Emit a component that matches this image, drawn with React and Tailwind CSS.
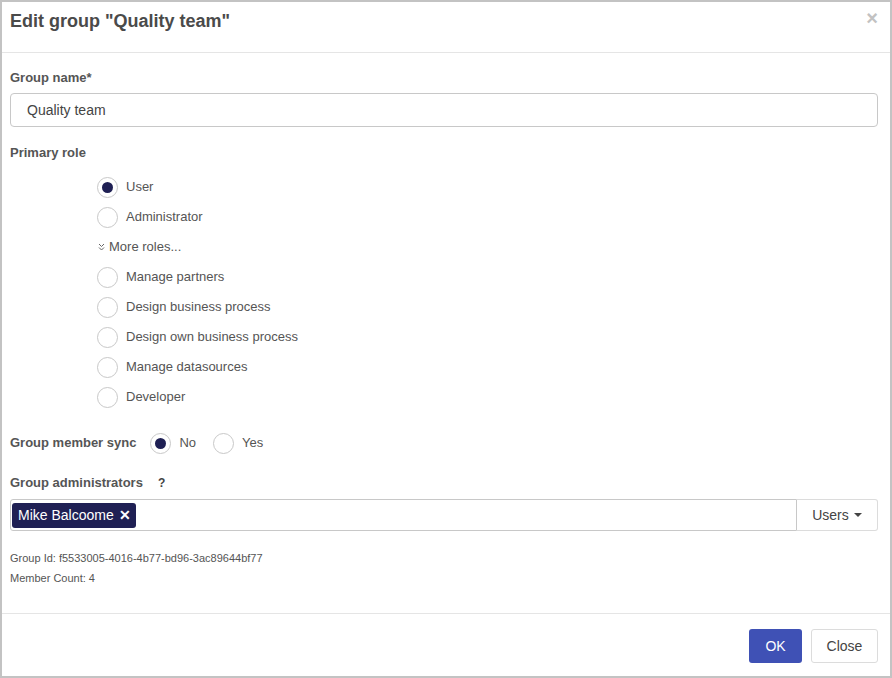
import React, { useState } from 'react';

const font = { fontFamily: '"Liberation Sans", Arial, sans-serif' };

const Radio = ({ checked, label, onClick }) => (
  <label className="flex items-center h-[30px] cursor-pointer" onClick={onClick}>
    <span className="w-[21px] h-[21px] rounded-full border border-[#c8c8c8] bg-white flex items-center justify-center shrink-0">
      {checked && <span className="w-[11px] h-[11px] rounded-full bg-[#1f2054]" />}
    </span>
    {label && <span className="ml-[8px] text-[13px] text-[#555]">{label}</span>}
  </label>
);

const roles = [
  'Manage partners',
  'Design business process',
  'Design own business process',
  'Manage datasources',
  'Developer',
];

export default function App() {
  const [role, setRole] = useState('User');
  const [sync, setSync] = useState('No');

  return (
    <div style={font} className="w-[892px] h-[678px] border-2 border-[#c3c3c3] bg-white flex flex-col">
      {/* Header */}
      <div className="h-[51px] border-b border-[#e5e5e5] flex items-start justify-between pl-[8px] pr-[12px] shrink-0">
        <h1 className="mt-[6px] text-[18px] font-bold text-[#4a4a4a]">Edit group "Quality team"</h1>
        <span className="mt-[6px] text-[#c2c2c2] text-[20px] font-bold leading-none">×</span>
      </div>

      {/* Body */}
      <div className="flex-1 pl-[8px] pr-[12px] pt-[16px]">
        <div className="text-[13px] font-bold text-[#555] leading-[18px]">Group name*</div>
        <div className="mt-[6px] h-[34px] border border-[#c8c8c8] rounded-[4px] flex items-center px-[16px] text-[14px] text-[#444]">
          Quality team
        </div>

        <div className="mt-[17px] text-[13px] font-bold text-[#555] leading-[18px]">Primary role</div>
        <div className="mt-[10px] pl-[87px] flex flex-col">
          <Radio label="User" checked={role === 'User'} onClick={() => setRole('User')} />
          <Radio label="Administrator" checked={role === 'Administrator'} onClick={() => setRole('Administrator')} />
          <div className="h-[30px] flex items-center text-[13px] text-[#555]">
            <svg width="7" height="8" viewBox="0 0 7 8" className="ml-[1px] mr-[4px]">
              <path d="M1 1 L3.5 3.5 L6 1 M1 4.5 L3.5 7 L6 4.5" fill="none" stroke="#666" strokeWidth="1" />
            </svg>
            More roles...
          </div>
          {roles.map(r => (
            <Radio key={r} label={r} checked={role === r} onClick={() => setRole(r)} />
          ))}
        </div>

        <div className="mt-[16px] flex items-center h-[30px]">
          <span className="text-[13px] font-bold text-[#555] mr-[14px]">Group member sync</span>
          <Radio label="No" checked={sync === 'No'} onClick={() => setSync('No')} />
          <span className="w-[17px]" />
          <Radio label="Yes" checked={sync === 'Yes'} onClick={() => setSync('Yes')} />
        </div>

        <div className="mt-[15px] flex items-center h-[20px]">
          <span className="text-[13px] font-bold text-[#555]">Group administrators</span>
          <span className="ml-[15px] text-[12px] font-bold text-[#444]">?</span>
        </div>

        <div className="mt-[6px] flex h-[32px]">
          <div className="flex-1 border border-[#c8c8c8] rounded-l-[3px] flex items-center pl-[1px]">
            <span className="h-[25px] bg-[#1f2054] text-white text-[14px] rounded-[3px] flex items-center pl-[6px] pr-[5px]">
              Mike Balcoome
              <span className="ml-[5px] font-bold text-[14px] leading-none">✕</span>
            </span>
          </div>
          <button className="w-[81px] border border-l-0 border-[#dcdcdc] rounded-r-[3px] text-[14px] text-[#444] flex items-center justify-center">
            Users
            <span className="ml-[5px] w-0 h-0 border-l-[4px] border-r-[4px] border-t-[4px] border-l-transparent border-r-transparent border-t-[#444]" />
          </button>
        </div>

        <div className="mt-[20px] text-[11px] text-[#555] leading-[14px]">Group Id: f5533005-4016-4b77-bd96-3ac89644bf77</div>
        <div className="mt-[6px] text-[11px] text-[#555] leading-[14px]">Member Count: 4</div>
      </div>

      {/* Footer */}
      <div className="h-[63px] border-t border-[#e5e5e5] flex items-start justify-end gap-[9px] pr-[12px] pt-[15px] shrink-0">
        <button className="w-[53px] h-[34px] bg-[#3f51b5] text-white text-[14px] rounded-[3px]">OK</button>
        <button className="w-[67px] h-[34px] border border-[#dcdcdc] text-[#444] text-[14px] rounded-[3px] bg-white">Close</button>
      </div>
    </div>
  );
}
